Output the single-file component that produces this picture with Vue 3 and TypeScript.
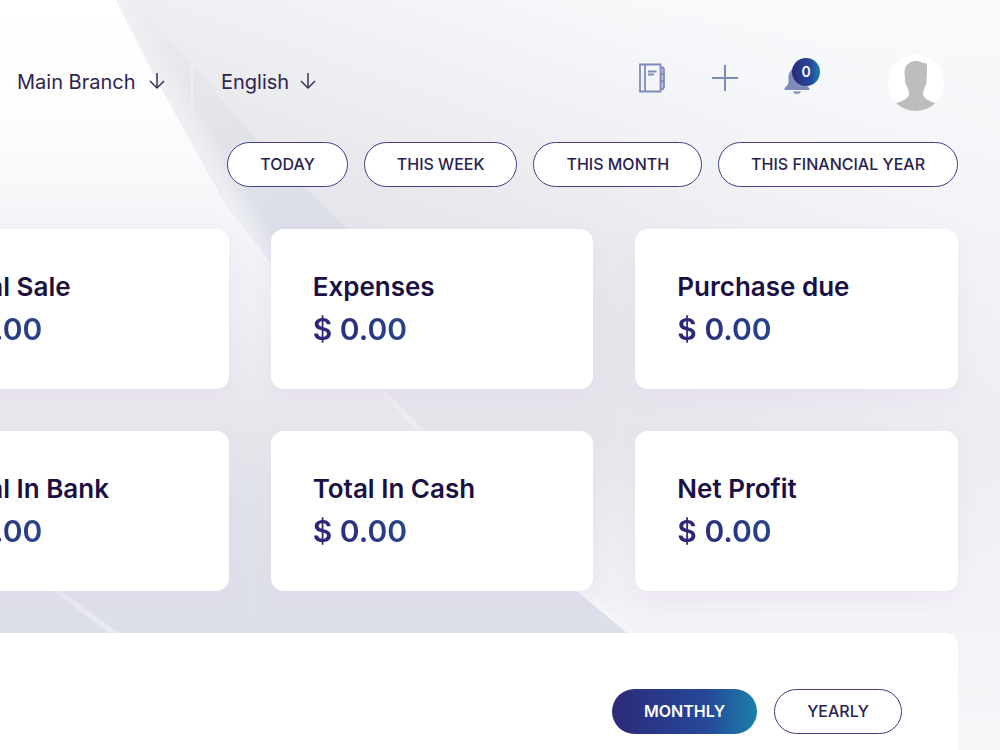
<script setup lang="ts">
import { ref } from 'vue'

interface Stat {
  title: string
  amount: string
}

const branch = ref('Main Branch')
const language = ref('English')
const ranges: string[] = ['Today', 'This Week', 'This Month', 'This Financial Year']
const stats: Stat[] = [
  { title: 'Total Sale', amount: '$ 0.00' },
  { title: 'Expenses', amount: '$ 0.00' },
  { title: 'Purchase due', amount: '$ 0.00' },
  { title: 'Total In Bank', amount: '$ 0.00' },
  { title: 'Total In Cash', amount: '$ 0.00' },
  { title: 'Net Profit', amount: '$ 0.00' },
]
const periods: string[] = ['Monthly', 'Yearly']
const period = ref('Monthly')
</script>

<template>
  <div class="page">
    <svg class="backdrop" viewBox="0 0 1000 750" preserveAspectRatio="none" aria-hidden="true">
      <defs>
        <linearGradient id="left" gradientUnits="userSpaceOnUse" x1="0" y1="0" x2="0" y2="750">
          <stop offset="0" stop-color="#ffffff" />
          <stop offset="0.14" stop-color="#fefefe" />
          <stop offset="0.3" stop-color="#f4f5f8" />
          <stop offset="0.42" stop-color="#eeeff3" />
          <stop offset="0.56" stop-color="#e6e7eb" />
          <stop offset="0.7" stop-color="#dee1e9" />
          <stop offset="1" stop-color="#dadde6" />
        </linearGradient>
        <linearGradient id="right" gradientUnits="userSpaceOnUse" x1="700" y1="-71" x2="567" y2="306">
          <stop offset="0" stop-color="#fcfcfd" />
          <stop offset="0.25" stop-color="#f7f8fa" />
          <stop offset="0.5" stop-color="#f1f2f5" />
          <stop offset="0.7" stop-color="#ecedf1" />
          <stop offset="0.85" stop-color="#e8e9ed" />
          <stop offset="1" stop-color="#e4e6eb" />
        </linearGradient>
        <linearGradient id="band" gradientUnits="userSpaceOnUse" x1="125" y1="0" x2="310" y2="260">
          <stop offset="0" stop-color="#ecedf0" />
          <stop offset="0.5" stop-color="#e3e4ea" />
          <stop offset="0.8" stop-color="#dcdfe8" />
          <stop offset="1" stop-color="#dadde7" />
        </linearGradient>
        <linearGradient id="edge" gradientUnits="userSpaceOnUse" x1="192" y1="136" x2="211" y2="125">
          <stop offset="0" stop-color="#f2f2f6" stop-opacity="0.75" />
          <stop offset="1" stop-color="#f2f2f6" stop-opacity="0" />
        </linearGradient>
        <linearGradient id="corner" gradientUnits="userSpaceOnUse" x1="0" y1="430" x2="0" y2="750">
          <stop offset="0" stop-color="#f2f2f6" stop-opacity="0" />
          <stop offset="0.25" stop-color="#f2f2f6" stop-opacity="0.4" />
          <stop offset="0.5" stop-color="#f2f2f6" stop-opacity="0.9" />
          <stop offset="1" stop-color="#f9f9fb" />
        </linearGradient>
        <linearGradient id="side" gradientUnits="userSpaceOnUse" x1="600" y1="0" x2="1000" y2="0">
          <stop offset="0" stop-color="#f5f5f9" stop-opacity="0" />
          <stop offset="1" stop-color="#f5f5f9" stop-opacity="0.5" />
        </linearGradient>
      </defs>
      <rect width="1000" height="750" fill="url(#left)" />
      <path d="M116 0H1000V750H768L628 633L578 591L418 431L378 389L268 258L227 206L192 143L154 75Z" fill="url(#right)" />
      <path d="M116 0H135L190 62L255 138L330 212L400 280H285L268 258L227 206L192 143L154 75Z" fill="url(#band)" />
      <path d="M116 0L154 75L192 143L227 206L268 258L292 250L252 193L217 130L179 62L141 0Z" fill="url(#edge)" />
      <path d="M418 431H1000V750H768L628 633L578 591Z" fill="url(#corner)" />
      <rect x="600" width="400" height="750" fill="url(#side)" />
      <path d="M376 387L384 389L426 431H417Z" fill="#f2f2f6" opacity="0.6" />
      <path d="M53 590H61L120 633H110Z" fill="#eeeef3" opacity="0.7" />
      <path d="M576 590H588L638 633H628Z" fill="#f8f8fa" opacity="0.5" />
    </svg>

    <header class="header">
      <div class="choosers">
        <label class="chooser branch">
          <select v-model="branch" aria-label="Branch">
            <option>Main Branch</option>
          </select>
          <svg class="arrow" viewBox="0 0 16 18" aria-hidden="true"><path d="M8 1v15M1 9l7 7 7-7" /></svg>
        </label>
        <label class="chooser language">
          <select v-model="language" aria-label="Language">
            <option>English</option>
          </select>
          <svg class="arrow" viewBox="0 0 16 18" aria-hidden="true"><path d="M8 1v15M1 9l7 7 7-7" /></svg>
        </label>
      </div>

      <nav class="tools">
        <button class="tool" type="button" aria-label="Ledger">
          <svg width="28" height="30" viewBox="0 0 28 30" fill="none" stroke="#808bb9" stroke-width="1.8">
            <path d="M2 1.500H22.500V28.500H2ZM7 1.500V28.500M10 8.500H18.500M10 11.500H16" />
            <path d="M23 4.500H25L26 6.500V24L25 26H23M23 11H26M23 18H26" />
            <path d="M23 5H26V25H23Z" fill="#808bb9" fill-opacity="0.5" stroke="none" />
          </svg>
        </button>
        <button class="tool" type="button" aria-label="Add">
          <svg width="26" height="26" viewBox="0 0 26 26" fill="none" stroke="#7e8ab9" stroke-width="2">
            <path d="M13 0V26M0 13H26" />
          </svg>
        </button>
        <button class="tool bell" type="button" aria-label="Notifications">
          <svg width="26" height="28" viewBox="0 0 26 28" fill="#7e8ab9">
            <path d="M13 1C7.500 2 4.500 6 4.500 12V16C4.500 19 2 20 .5 22.500V24H25.500V22.500C23 20 21.500 19 21.500 16V12C21.500 6 18 2 13 1ZM9 25.500H17C16 28.600 10 28.600 9 25.500Z" />
          </svg>
          <span class="badge">0</span>
        </button>
        <button class="avatar" type="button" aria-label="Profile">
          <svg viewBox="0 0 56 56" aria-hidden="true">
            <circle cx="28" cy="28" r="28" fill="#fff" />
            <path d="M8 48C14 46.500 19 44 21 40C21.500 37 20 34 19 31C17 29 16.500 26 17 23C16 16 16.500 11 20 9C23 5.500 31 5 35 8L39 8.500C38.500 10 39 12 39 14C39 17 39 20 38.500 23C39 26 38.500 29 37 31C36.500 34 34.500 37 35 40C37 44 42 46.500 47.500 48C36.500 58.500 19 58.500 8 48Z" fill="#bdbdbd" />
          </svg>
        </button>
      </nav>
    </header>

    <main class="content">
      <div class="ranges">
        <button v-for="range in ranges" :key="range" class="pill" type="button">{{ range }}</button>
      </div>

      <section class="stats">
        <article v-for="stat in stats" :key="stat.title" class="card">
          <h2>{{ stat.title }}</h2>
          <p>{{ stat.amount }}</p>
        </article>
      </section>

      <section class="panel">
        <button
          v-for="name in periods"
          :key="name"
          type="button"
          class="pill"
          :class="{ active: period === name }"
          @click="period = name"
        >{{ name }}</button>
      </section>
    </main>
  </div>
</template>

<style>
body {
  overflow: hidden;
}
</style>

<style scoped>
.page {
  position: relative;
  min-height: 100vh;
  overflow: hidden;
  display: flex;
  flex-direction: column;
  font-family: Inter, "Open Sans", sans-serif;
  color: #1f1647;
}
.page * {
  box-sizing: border-box;
}
.backdrop {
  position: absolute;
  inset: 0;
  width: 100%;
  height: 100%;
}
.header {
  position: relative;
  display: flex;
  justify-content: space-between;
  padding: 55px 56px 31px 17px;
}
.choosers {
  display: flex;
  align-items: center;
}
.chooser {
  position: relative;
  height: 50px;
  padding-bottom: 2px;
  display: flex;
  align-items: center;
}
.branch {
  width: 148px;
  margin-right: 56px;
}
.branch::after {
  content: "";
  position: absolute;
  right: -28px;
  top: 2px;
  width: 2px;
  height: 50px;
  background: #eeeff2;
}
.language {
  width: 95px;
}
.chooser select {
  appearance: none;
  width: 100%;
  border: 0;
  padding: 0;
  background: none;
  font: 400 20px/30px Inter, "Open Sans", sans-serif;
  color: #2d2550;
}
.arrow {
  position: absolute;
  right: 0;
  top: 14px;
  width: 16px;
  height: 18px;
  fill: none;
  stroke: #3a3159;
  stroke-width: 1.5;
  pointer-events: none;
}
.tools {
  display: flex;
  gap: 29px;
}
.tool {
  position: relative;
  width: 44px;
  height: 46px;
  display: flex;
  align-items: center;
  justify-content: center;
  border: 0;
  padding: 0;
  background: none;
}
.bell {
  padding: 4px 2px 0 0;
}
.badge {
  position: absolute;
  top: 3px;
  right: 0;
  width: 28px;
  height: 28px;
  border-radius: 50%;
  background: linear-gradient(90deg, #2d2a78, #24479a 65%, #1a80a8);
  color: #fff;
  font: 600 14px/28px Inter, "Open Sans", sans-serif;
  text-align: center;
}
.avatar {
  width: 56px;
  height: 56px;
  margin-left: 39px;
  border: 0;
  padding: 0;
  border-radius: 50%;
  background: none;
}
.avatar svg {
  display: block;
}
.content {
  position: relative;
  flex: 1;
  display: flex;
  flex-direction: column;
  gap: 42px;
  padding-right: 42px;
}
.ranges {
  display: flex;
  justify-content: flex-end;
  gap: 16px;
}
.pill {
  height: 45px;
  padding: 0 32px 2px;
  border: 1px solid #433e86;
  border-radius: 23px;
  background: #fff;
  color: #2a2350;
  font: 500 16px/24px Inter, "Open Sans", sans-serif;
  text-transform: uppercase;
  white-space: nowrap;
}
.pill.active {
  border: 0;
  background: linear-gradient(90deg, #2d2a78, #26489a 65%, #1a80a8);
  color: #fff;
  font-weight: 600;
}
.stats {
  display: grid;
  grid-template-columns: repeat(3, 1fr);
  gap: 42px;
  margin-left: -94px;
}
.card {
  padding: 42px 42px 38px;
  border-radius: 13px;
  background: #fff;
  box-shadow: 0 8px 20px rgba(236, 208, 244, 0.4);
}
.card h2 {
  margin: 0 0 5px;
  font-size: 26px;
  line-height: 32px;
  font-weight: 600;
  color: #1b1044;
}
.card p {
  margin: 0 0 1px;
  font-size: 30px;
  line-height: 42px;
  font-weight: 600;
  background: linear-gradient(90deg, #2d2478, #264a8c 45%, #1a80a8);
  background-clip: text;
  -webkit-background-clip: text;
  color: transparent;
}
.panel {
  flex: 1;
  display: flex;
  justify-content: flex-end;
  align-items: flex-start;
  gap: 17px;
  padding: 56px 56px 17px;
  border-radius: 0 13px 0 0;
  background: #fff;
}
</style>
